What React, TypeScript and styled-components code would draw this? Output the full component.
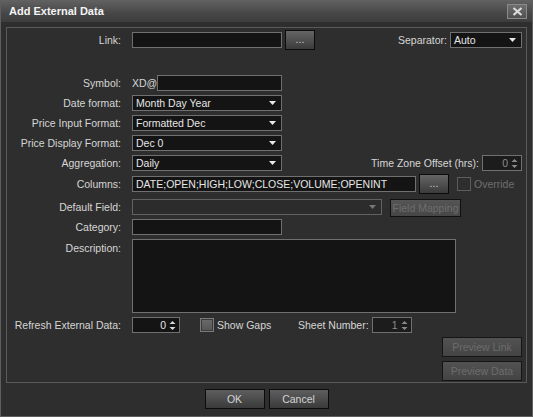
import React from 'react';
import styled, { createGlobalStyle } from 'styled-components';

const GlobalStyle = createGlobalStyle`
  html, body {
    margin: 0;
    padding: 0;
    background: #2e2e2e;
  }
  * {
    box-sizing: border-box;
  }
`;

const App = () => {
  return (
    <>
      <GlobalStyle />
      <Window>
        <TitleBar>
          <Title>Add External Data</Title>
          <CloseButton>
            <svg width="11" height="9" viewBox="0 0 11 9">
              <path d="M1.5 1 L9.5 8 M9.5 1 L1.5 8" stroke="#dcdcdc" strokeWidth="2.2" />
            </svg>
          </CloseButton>
        </TitleBar>
        <Body>
          <Group>
            <Row top={2}>
              <Label>Link:</Label>
              <TextBox width={150} />
              <DotsButton>...</DotsButton>
              <RightCluster>
                <InlineLabel>Separator:</InlineLabel>
                <Select width={72} value="Auto" />
              </RightCluster>
            </Row>

            <Row top={23}>
              <Label>Symbol:</Label>
              <Prefix>XD@</Prefix>
              <TextBox width={125} />
            </Row>
            <Row>
              <Label>Date format:</Label>
              <Select width={150} value="Month Day Year" />
            </Row>
            <Row>
              <Label>Price Input Format:</Label>
              <Select width={150} value="Formatted Dec" />
            </Row>
            <Row>
              <Label>Price Display Format:</Label>
              <Select width={150} value="Dec 0" />
            </Row>
            <Row>
              <Label>Aggregation:</Label>
              <Select width={150} value="Daily" />
              <RightCluster>
                <InlineLabel>Time Zone Offset (hrs):</InlineLabel>
                <Spinner width={40} value="0" disabled />
              </RightCluster>
            </Row>

            <Row top={1}>
              <Label>Columns:</Label>
              <TextBox width={284}>DATE;OPEN;HIGH;LOW;CLOSE;VOLUME;OPENINT</TextBox>
              <DotsButton>...</DotsButton>
              <CheckWrap gap={8}>
                <CheckBox />
                <CheckText disabled>Override</CheckText>
              </CheckWrap>
            </Row>
            <Row top={3}>
              <Label>Default Field:</Label>
              <Select width={250} value="" disabled />
              <MappingButton>Field Mapping</MappingButton>
            </Row>
            <Row>
              <Label>Category:</Label>
              <TextBox width={150} />
            </Row>
            <DescRow>
              <DescLabel>Description:</DescLabel>
              <TextArea />
            </DescRow>
            <Row top={2}>
              <Label>Refresh External Data:</Label>
              <Spinner width={48} value="0" />
              <GapsCell>
                <CheckBox filled />
                <CheckText>Show Gaps</CheckText>
              </GapsCell>
              <InlineLabel>Sheet Number:</InlineLabel>
              <Spinner width={40} value="1" disabled />
            </Row>
            <PreviewColumn>
              <PreviewButton>Preview Link</PreviewButton>
              <PreviewButton>Preview Data</PreviewButton>
            </PreviewColumn>
          </Group>
          <Footer>
            <DialogButton>OK</DialogButton>
            <DialogButton>Cancel</DialogButton>
          </Footer>
        </Body>
      </Window>
    </>
  );
};

export default App;

interface FieldProps {
  width: number;
  value: string;
  disabled?: boolean;
}

const Select = ({ width, value, disabled }: FieldProps) => (
  <SelectBox width={width} disabled={disabled}>
    <span>{value}</span>
    <svg width="7" height="4" viewBox="0 0 7 4">
      <path d="M0 0 H7 L3.5 4 Z" fill={disabled ? '#777' : '#e8e8e8'} />
    </svg>
  </SelectBox>
);

const Spinner = ({ width, value, disabled }: FieldProps) => (
  <SpinBox width={width} disabled={disabled}>
    <span>{value}</span>
    <svg width="7" height="11" viewBox="0 0 7 11">
      <path d="M0.5 4 L3.5 1 L6.5 4 Z M0.5 7 L3.5 10 L6.5 7 Z" fill={disabled ? '#8a8a8a' : '#d8d8d8'} />
    </svg>
  </SpinBox>
);

const Window = styled.div`
  width: 533px;
  height: 417px;
  background: #2e2e2e;
  border: 1px solid #5e5e5e;
  border-top: none;
  display: flex;
  flex-direction: column;
  font-family: 'Liberation Sans', Arial, sans-serif;
  font-size: 10.5px;
  color: #d6d6d6;
`;

const TitleBar = styled.div`
  height: 22px;
  flex: none;
  background: linear-gradient(#626262, #474747 60%, #3d3d3d);
  display: flex;
  align-items: center;
  justify-content: space-between;
  padding: 0 5px 0 8px;
`;

const Title = styled.div`
  font-weight: bold;
  font-size: 11px;
  color: #f4f4f4;
`;

const CloseButton = styled.div`
  width: 20px;
  height: 15px;
  border: 1px solid #8a8a8a;
  background: linear-gradient(#6e6e6e, #505050);
  display: flex;
  align-items: center;
  justify-content: center;
`;

const Body = styled.div`
  flex: 1;
  padding: 5px 5px 0 5px;
  display: flex;
  flex-direction: column;
`;

const Group = styled.div`
  height: 356px;
  border: 1px solid #5a5a5a;
  padding: 0 4px 0 0;
  display: flex;
  flex-direction: column;
`;

const Row = styled.div<{ top?: number }>`
  height: 20px;
  margin-top: ${(p) => p.top ?? 0}px;
  display: flex;
  align-items: center;
`;

const Label = styled.div`
  width: 114px;
  flex: none;
  margin-right: 11px;
  text-align: right;
  white-space: nowrap;
`;

const InlineLabel = styled.div`
  margin-right: 3px;
  white-space: nowrap;
`;

const RightCluster = styled.div`
  margin-left: auto;
  display: flex;
  align-items: center;
`;

const Prefix = styled.div`
  width: 25px;
`;

const TextBox = styled.div<{ width: number }>`
  width: ${(p) => p.width}px;
  height: 16px;
  background: #141414;
  border: 1px solid #707070;
  color: #e6e6e6;
  padding: 0 3px;
  line-height: 14px;
  white-space: nowrap;
  overflow: hidden;
`;

const SelectBox = styled.div<{ width: number; disabled?: boolean }>`
  width: ${(p) => p.width}px;
  height: 16px;
  background: ${(p) => (p.disabled ? '#2c2c2c' : '#141414')};
  border: 1px solid ${(p) => (p.disabled ? '#626262' : '#707070')};
  color: #e6e6e6;
  padding: 0 5px 0 3px;
  display: flex;
  align-items: center;
  justify-content: space-between;
  white-space: nowrap;
`;

const SpinBox = styled.div<{ width: number; disabled?: boolean }>`
  width: ${(p) => p.width}px;
  height: 16px;
  background: ${(p) => (p.disabled ? '#1c1c1c' : '#141414')};
  border: 1px solid #707070;
  color: ${(p) => (p.disabled ? '#8c8c8c' : '#e6e6e6')};
  padding: 0 3px 0 3px;
  display: flex;
  align-items: center;
  justify-content: flex-end;
  gap: 3px;
`;

const DotsButton = styled.div`
  width: 30px;
  height: 20px;
  margin-left: 3px;
  border: 1px solid #0c0c0c;
  background: linear-gradient(#656565, #3b3b3b);
  color: #cfcfcf;
  display: flex;
  align-items: center;
  justify-content: center;
  padding-bottom: 2px;
`;

const CheckWrap = styled.div<{ gap: number }>`
  margin-left: ${(p) => p.gap}px;
  display: flex;
  align-items: center;
  gap: 3px;
`;

const GapsCell = styled.div`
  width: 98px;
  margin-left: 20px;
  display: flex;
  align-items: center;
  gap: 3px;
`;

const CheckBox = styled.div<{ filled?: boolean }>`
  width: 14px;
  height: 14px;
  border: 1px solid ${(p) => (p.filled ? '#7a7a7a' : '#5c5c5c')};
  background: ${(p) => (p.filled ? 'linear-gradient(#6a6a6a, #555)' : '#2e2e2e')};
  box-shadow: ${(p) => (p.filled ? 'inset 0 0 0 1px #3a3a3a' : 'none')};
`;

const CheckText = styled.span<{ disabled?: boolean }>`
  color: ${(p) => (p.disabled ? '#6e6e6e' : '#d6d6d6')};
`;

const MappingButton = styled.div`
  width: 71px;
  height: 18px;
  margin-left: 8px;
  margin-top: 2px;
  border: 1px solid #101010;
  background: linear-gradient(#555, #464646);
  color: #6e6e6e;
  display: flex;
  align-items: center;
  justify-content: center;
  white-space: nowrap;
`;

const DescRow = styled.div`
  margin-top: 2px;
  display: flex;
`;

const DescLabel = styled(Label)`
  padding-top: 3px;
`;

const TextArea = styled.div`
  width: 324px;
  height: 74px;
  background: #141414;
  border: 1px solid #707070;
`;

const PreviewColumn = styled.div`
  margin-top: 2px;
  align-self: flex-end;
  display: flex;
  flex-direction: column;
  gap: 4px;
`;

const PreviewButton = styled.div`
  width: 80px;
  height: 20px;
  border: 1px solid #151515;
  background: linear-gradient(#525252, #444);
  color: #6c6c6c;
  display: flex;
  align-items: center;
  justify-content: center;
`;

const Footer = styled.div`
  margin-top: 6px;
  display: flex;
  justify-content: center;
  gap: 4px;
`;

const DialogButton = styled.div`
  width: 60px;
  height: 20px;
  border: 1px solid #0c0c0c;
  background: linear-gradient(#5e5e5e, #3a3a3a);
  color: #d4d4d4;
  display: flex;
  align-items: center;
  justify-content: center;
`;
